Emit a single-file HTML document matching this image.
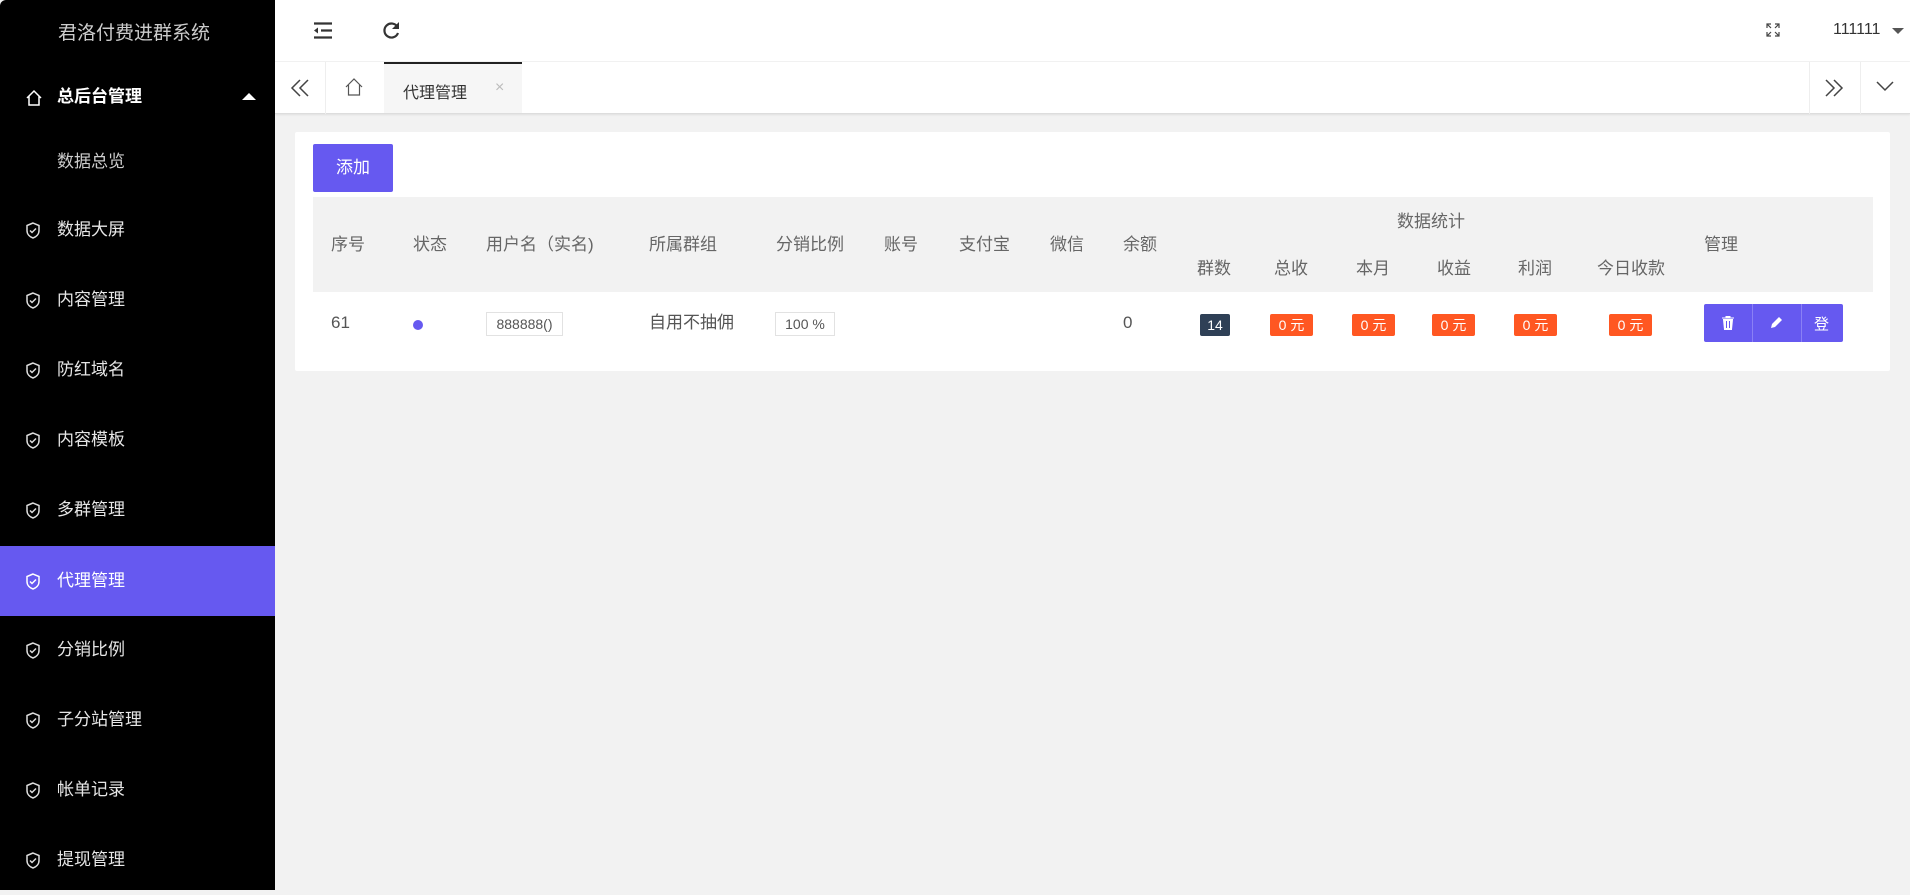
<!DOCTYPE html><html><head><meta charset="utf-8"><style>
*{margin:0;padding:0;box-sizing:border-box}
body{width:1910px;height:890px;overflow:hidden;background:#f2f2f2;font-family:"Liberation Sans","Noto Sans CJK SC",sans-serif;position:relative;color:#555}
.a{position:absolute;white-space:nowrap}
#side{position:absolute;left:0;top:0;width:275px;height:890px;background:#000;border-radius:6px 0 0 0}
.it{position:absolute;left:0;width:275px;height:70px;line-height:70px;color:#e6e6e6;font-size:17px;padding-left:57px}
.it svg{position:absolute;left:25px;top:27px}
.th{position:absolute;font-size:17px;color:#666;white-space:nowrap;line-height:20px}
.rw{position:absolute;font-size:17px;color:#555;white-space:nowrap;line-height:20px;top:313px}
.bd{position:absolute;top:314px;height:22px;line-height:22px;color:#fff;font-size:14px;text-align:center;border-radius:2px;background:#ff5722}
</style></head><body>
<div id="side">
<div class="a" style="left:58px;top:18px;font-size:19px;color:#ccc">君洛付费进群系统</div>
<div class="it" style="top:62px;color:#fff;font-weight:bold"><svg width="18" height="18" viewBox="0 0 18 18"><path d="M2 9L9 2l7 7M4 7v9h10V7" fill="none" stroke="#fff" stroke-width="1.5"/></svg>总后台管理<span style="position:absolute;left:242px;top:31px;border:7px solid transparent;border-bottom:7px solid #fff;border-top:0"></span></div>
<div class="it" style="top:127px;color:#ccc">数据总览</div>
<div class="it" style="top:195px"><svg width="16" height="17" viewBox="0 0 16 17"><path d="M8 1L2 3.5v5c0 4 3 6.5 6 7.5 3-1 6-3.5 6-7.5v-5z M5 8.5l2 2 4-4" fill="none" stroke="#ddd" stroke-width="1.5"/></svg>数据大屏</div>
<div class="it" style="top:265px"><svg width="16" height="17" viewBox="0 0 16 17"><path d="M8 1L2 3.5v5c0 4 3 6.5 6 7.5 3-1 6-3.5 6-7.5v-5z M5 8.5l2 2 4-4" fill="none" stroke="#ddd" stroke-width="1.5"/></svg>内容管理</div>
<div class="it" style="top:335px"><svg width="16" height="17" viewBox="0 0 16 17"><path d="M8 1L2 3.5v5c0 4 3 6.5 6 7.5 3-1 6-3.5 6-7.5v-5z M5 8.5l2 2 4-4" fill="none" stroke="#ddd" stroke-width="1.5"/></svg>防红域名</div>
<div class="it" style="top:405px"><svg width="16" height="17" viewBox="0 0 16 17"><path d="M8 1L2 3.5v5c0 4 3 6.5 6 7.5 3-1 6-3.5 6-7.5v-5z M5 8.5l2 2 4-4" fill="none" stroke="#ddd" stroke-width="1.5"/></svg>内容模板</div>
<div class="it" style="top:475px"><svg width="16" height="17" viewBox="0 0 16 17"><path d="M8 1L2 3.5v5c0 4 3 6.5 6 7.5 3-1 6-3.5 6-7.5v-5z M5 8.5l2 2 4-4" fill="none" stroke="#ddd" stroke-width="1.5"/></svg>多群管理</div>
<div class="it" style="top:546px;background:#6659f0;color:#fff"><svg width="16" height="17" viewBox="0 0 16 17"><path d="M8 1L2 3.5v5c0 4 3 6.5 6 7.5 3-1 6-3.5 6-7.5v-5z M5 8.5l2 2 4-4" fill="none" stroke="#fff" stroke-width="1.5"/></svg>代理管理</div>
<div class="it" style="top:615px"><svg width="16" height="17" viewBox="0 0 16 17"><path d="M8 1L2 3.5v5c0 4 3 6.5 6 7.5 3-1 6-3.5 6-7.5v-5z M5 8.5l2 2 4-4" fill="none" stroke="#ddd" stroke-width="1.5"/></svg>分销比例</div>
<div class="it" style="top:685px"><svg width="16" height="17" viewBox="0 0 16 17"><path d="M8 1L2 3.5v5c0 4 3 6.5 6 7.5 3-1 6-3.5 6-7.5v-5z M5 8.5l2 2 4-4" fill="none" stroke="#ddd" stroke-width="1.5"/></svg>子分站管理</div>
<div class="it" style="top:755px"><svg width="16" height="17" viewBox="0 0 16 17"><path d="M8 1L2 3.5v5c0 4 3 6.5 6 7.5 3-1 6-3.5 6-7.5v-5z M5 8.5l2 2 4-4" fill="none" stroke="#ddd" stroke-width="1.5"/></svg>帐单记录</div>
<div class="it" style="top:825px"><svg width="16" height="17" viewBox="0 0 16 17"><path d="M8 1L2 3.5v5c0 4 3 6.5 6 7.5 3-1 6-3.5 6-7.5v-5z M5 8.5l2 2 4-4" fill="none" stroke="#ddd" stroke-width="1.5"/></svg>提现管理</div>
</div>
<div class="a" style="left:275px;top:0;width:1635px;height:62px;background:#fff;border-bottom:1px solid #f2f2f2"></div>
<svg class="a" style="left:313px;top:22px" width="20" height="17" viewBox="0 0 20 17"><path d="M1 1.5h18M8 8.5h11M1 15.5h18" stroke="#333" stroke-width="2.2"/><path d="M1 8.5l4-3v6z" fill="#333"/></svg>
<svg class="a" style="left:382px;top:21px" width="19" height="19" viewBox="0 0 19 19"><path d="M15.5 6A7 7 0 1 0 16 12" fill="none" stroke="#333" stroke-width="2.2"/><path d="M17 1v7h-7z" fill="#333"/></svg>
<svg class="a" style="left:1766px;top:23px" width="14" height="14" viewBox="0 0 14 14"><path d="M1 5V1h4M9 1h4v4M13 9v4H9M5 13H1V9M1 1l4 4M13 1L9 5M13 13L9 9M1 13l4-4" fill="none" stroke="#444" stroke-width="1.2"/></svg>
<div class="a" style="left:1833px;top:21px;font-size:16px;color:#333">111111</div>
<div class="a" style="left:1892px;top:28px;border:6px solid transparent;border-top:6px solid #555;border-bottom:0"></div>
<div class="a" style="left:275px;top:62px;width:1635px;height:52px;background:#fff;border-bottom:1px solid #ddd;box-shadow:0 1px 2px rgba(0,0,0,.08)"></div>
<svg class="a" style="left:290px;top:79px" width="20" height="18" viewBox="0 0 20 18"><path d="M10 1L2 9l8 8M18 1l-8 8 8 8" fill="none" stroke="#444" stroke-width="1.5"/></svg>
<div class="a" style="left:325px;top:62px;width:1px;height:52px;background:#eee"></div>
<svg class="a" style="left:344px;top:77px" width="20" height="20" viewBox="0 0 20 20"><path d="M2 10L10 2l8 8M4.5 8v10h11V8" fill="none" stroke="#555" stroke-width="1.2"/></svg>
<div class="a" style="left:384px;top:62px;width:138px;height:51px;background:#f6f6f6;border-top:2px solid #222"></div>
<div class="a" style="left:403px;top:79px;font-size:16px;color:#333">代理管理</div>
<div class="a" style="left:495px;top:79px;font-size:16px;color:#bbb">×</div>
<div class="a" style="left:1809px;top:62px;width:1px;height:52px;background:#eee"></div>
<svg class="a" style="left:1824px;top:79px" width="20" height="18" viewBox="0 0 20 18"><path d="M2 1l8 8-8 8M10 1l8 8-8 8" fill="none" stroke="#444" stroke-width="1.5"/></svg>
<div class="a" style="left:1860px;top:62px;width:1px;height:52px;background:#eee"></div>
<svg class="a" style="left:1876px;top:81px" width="18" height="11" viewBox="0 0 18 11"><path d="M1 1l8 8 8-8" fill="none" stroke="#444" stroke-width="1.5"/></svg>
<div class="a" style="left:295px;top:132px;width:1595px;height:239px;background:#fff;border-radius:2px"></div>
<div class="a" style="left:313px;top:144px;width:80px;height:48px;background:#6659f0;border-radius:2px;color:#fff;font-size:17px;line-height:48px;text-align:center">添加</div>
<div class="a" style="left:313px;top:197px;width:1560px;height:95px;background:#f2f2f2"></div>
<div class="th" style="left:331px;top:235px">序号</div>
<div class="th" style="left:413px;top:235px">状态</div>
<div class="th" style="left:486px;top:235px">用户名（实名)</div>
<div class="th" style="left:649px;top:235px">所属群组</div>
<div class="th" style="left:776px;top:235px">分销比例</div>
<div class="th" style="left:884px;top:235px">账号</div>
<div class="th" style="left:959px;top:235px">支付宝</div>
<div class="th" style="left:1050px;top:235px">微信</div>
<div class="th" style="left:1123px;top:235px">余额</div>
<div class="th" style="left:1397px;top:212px">数据统计</div>
<div class="th" style="left:1197px;top:259px">群数</div>
<div class="th" style="left:1274px;top:259px">总收</div>
<div class="th" style="left:1356px;top:259px">本月</div>
<div class="th" style="left:1437px;top:259px">收益</div>
<div class="th" style="left:1518px;top:259px">利润</div>
<div class="th" style="left:1597px;top:259px">今日收款</div>
<div class="th" style="left:1704px;top:235px">管理</div>
<div class="rw" style="left:331px">61</div>
<div class="a" style="left:413px;top:320px;width:10px;height:10px;border-radius:50%;background:#6659f0"></div>
<div class="a" style="left:486px;top:312px;width:77px;height:24px;border:1px solid #e2e2e2;font-size:14px;line-height:22px;text-align:center;color:#555">888888()</div>
<div class="rw" style="left:649px">自用不抽佣</div>
<div class="a" style="left:775px;top:312px;width:60px;height:24px;border:1px solid #e2e2e2;font-size:14px;line-height:22px;text-align:center;color:#555">100 %</div>
<div class="rw" style="left:1123px">0</div>
<div class="bd" style="left:1200px;width:30px;background:#2f4056">14</div>
<div class="bd" style="left:1270px;width:43px">0 元</div>
<div class="bd" style="left:1352px;width:43px">0 元</div>
<div class="bd" style="left:1432px;width:43px">0 元</div>
<div class="bd" style="left:1514px;width:43px">0 元</div>
<div class="bd" style="left:1609px;width:43px">0 元</div>
<div class="a" style="left:1704px;top:304px;width:139px;height:38px;background:#6659f0;border-radius:2px"></div>
<div class="a" style="left:1752px;top:304px;width:1px;height:38px;background:#8a80f5"></div>
<div class="a" style="left:1801px;top:304px;width:1px;height:38px;background:#8a80f5"></div>
<svg class="a" style="left:1720px;top:315px" width="16" height="16" viewBox="0 0 16 16"><path d="M2 3h12M6 3V1.5h4V3M3.5 4.5h9l-1 10h-7z" fill="#fff" stroke="#fff" stroke-width="1"/><path d="M6.5 6v7M9.5 6v7" stroke="#6659f0" stroke-width="1"/></svg>
<svg class="a" style="left:1769px;top:315px" width="15" height="15" viewBox="0 0 15 15"><path d="M2 13l1-4 7-7 3 3-7 7z" fill="#fff"/></svg>
<div class="a" style="left:1814px;top:313px;font-size:15px;color:#fff">登</div>
</body></html>
